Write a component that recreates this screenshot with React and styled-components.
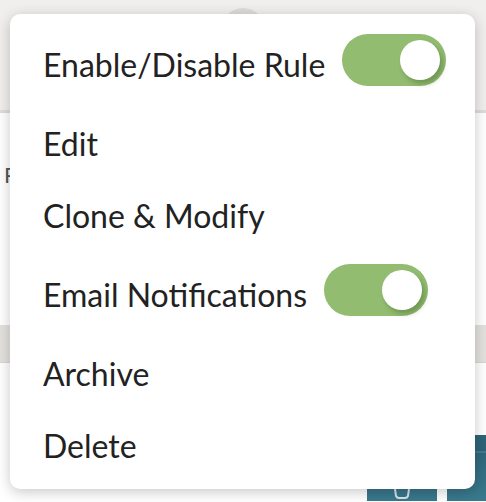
import React from "react"
import styled, { createGlobalStyle } from "styled-components"

const GlobalStyle = createGlobalStyle`
  html, body {
    margin: 0;
    padding: 0;
    background: #ffffff;
    font-family: Lato, "Open Sans", "Liberation Sans", sans-serif;
  }
  * {
    box-sizing: border-box;
  }
`

const Page = styled.div`
  position: relative;
  width: 486px;
  height: 502px;
  overflow: hidden;
  background: #ffffff;
`

const Header = styled.header`
  height: 113px;
  background: #f0efed;
  border-bottom: 3px solid #dedddb;
  display: flex;
  justify-content: center;
  padding-top: 8px;
`

const Avatar = styled.div`
  width: 44px;
  height: 44px;
  border-radius: 50%;
  background: #dcdbd9;
`

const Body = styled.section`
  height: 212px;
  padding: 48px 0 0 4px;
  font-size: 22px;
  color: #555;
`

const Band = styled.div`
  height: 38px;
  background: #e2e1de;
  border-bottom: 1px solid #d8d7d4;
`

const Footer = styled.div`
  display: flex;
  justify-content: flex-end;
  gap: 10px;
  padding-top: 72px;
`

const ActionButton = styled.div`
  width: ${props => props.width}px;
  height: 66px;
  background: linear-gradient(#2d6477, #2d6477 16px, #5b8c9b 17px, #2f687b 18px, #3a7a8e);
  display: flex;
  justify-content: center;
  align-items: flex-end;
  padding-bottom: 2px;
`

const Menu = styled.div`
  position: absolute;
  left: 10px;
  top: 14px;
  width: 465px;
  height: 475px;
  background: #ffffff;
  border-radius: 10px;
  box-shadow: 0 3px 14px rgba(0, 0, 0, 0.22);
  padding: 8px 0 7px;
  display: flex;
  flex-direction: column;
`

const Item = styled.div`
  height: ${props => (props.toggle ? 86 : 72)}px;
  flex-shrink: 0;
  padding: 0 20px 0 33px;
  display: flex;
  align-items: center;
  gap: 17px;
  font-size: 32px;
  line-height: 1.2;
  white-space: nowrap;
  color: #222222;
  cursor: pointer;
`

const Switch = styled.div`
  width: 104px;
  height: 52px;
  margin-bottom: 11px;
  border-radius: 26px;
  background: #92bc70;
  padding: 6px;
  display: flex;
  justify-content: ${props => (props.on ? "flex-end" : "flex-start")};
  flex-shrink: 0;
`

const Knob = styled.div`
  width: 40px;
  height: 40px;
  border-radius: 50%;
  background: #ffffff;
  box-shadow: 3px 4px 5px rgba(40, 70, 20, 0.3);
`

const items = [
  { label: "Enable/Disable Rule", toggle: true },
  { label: "Edit" },
  { label: "Clone & Modify" },
  { label: "Email Notifications", toggle: true },
  { label: "Archive" },
  { label: "Delete" },
]

const App = () => (
  <Page>
    <GlobalStyle />
    <Header>
      <Avatar />
    </Header>
    <Body>P</Body>
    <Band />
    <Footer>
      <ActionButton width={70}>
        <svg width="18" height="10" viewBox="0 0 18 10">
          <path d="M2 0 L3 7 Q4 9 6 9 L12 9 Q14 9 15 7 L16 0" fill="none" stroke="#d8e3e6" strokeWidth="2" />
        </svg>
      </ActionButton>
      <ActionButton width={39} />
    </Footer>
    <Menu>
      {items.map(item => (
        <Item key={item.label} toggle={item.toggle}>
          <span>{item.label}</span>
          {item.toggle && (
            <Switch on>
              <Knob />
            </Switch>
          )}
        </Item>
      ))}
    </Menu>
  </Page>
)

export default App
